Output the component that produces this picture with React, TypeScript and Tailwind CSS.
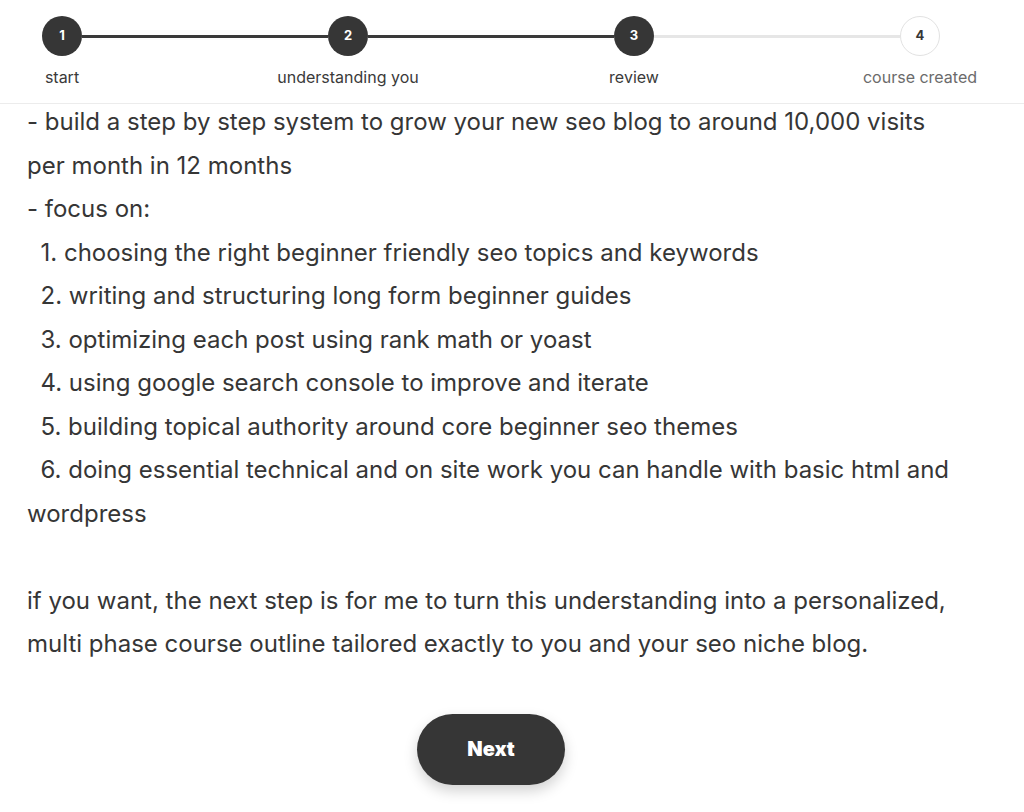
import React from "react";

const steps = [
  { n: "1", label: "start", done: true },
  { n: "2", label: "understanding you", done: true },
  { n: "3", label: "review", done: true },
  { n: "4", label: "course created", done: false },
];

const body = `- build a step by step system to grow your new seo blog to around 10,000 visits per month in 12 months
- focus on:
  1. choosing the right beginner friendly seo topics and keywords
  2. writing and structuring long form beginner guides
  3. optimizing each post using rank math or yoast
  4. using google search console to improve and iterate
  5. building topical authority around core beginner seo themes
  6. doing essential technical and on site work you can handle with basic html and wordpress

if you want, the next step is for me to turn this understanding into a personalized, multi phase course outline tailored exactly to you and your seo niche blog.`;

export default function App() {
  return (
    <div className="w-[1024px] h-[812px] overflow-hidden bg-white flex flex-col">
      <div className="h-[104px] shrink-0 border-b border-[#ececec] bg-white">
        <div className="flex items-start pl-[42px] pr-[84px] pt-[16px]">
          {steps.map((s, i) => (
            <React.Fragment key={s.n}>
              <div className="w-10 flex flex-col items-center shrink-0">
                <div
                  className={
                    s.done
                      ? "w-10 h-10 rounded-full bg-[#363636] text-white flex items-center justify-center text-[13px] font-bold"
                      : "w-10 h-10 rounded-full bg-white border border-[#e2e2e2] text-[#363636] flex items-center justify-center text-[13px] font-bold"
                  }
                  style={{ fontFamily: "Inter, 'Liberation Sans', sans-serif" }}
                >
                  {s.n}
                </div>
                <div
                  className={
                    "mt-[11px] whitespace-nowrap text-[16px] leading-[20px] " +
                    (s.done ? "text-[#3a3a3a]" : "text-[#6b6b6b]")
                  }
                  style={{ fontFamily: "Inter, 'Liberation Sans', sans-serif" }}
                >
                  {s.label}
                </div>
              </div>
              {i < steps.length - 1 && (
                <div
                  className={
                    "flex-1 h-[3px] mt-[18.5px] " +
                    (i < 2 ? "bg-[#3a3a3a]" : "bg-[#e6e6e6]")
                  }
                />
              )}
            </React.Fragment>
          ))}
        </div>
      </div>
      <div className="flex-1 overflow-hidden">
        <div className="pl-[27px] w-[955px] -mt-[4px]">
          <p
            className="whitespace-pre-wrap text-[24px] leading-[43.5px] text-[#363636]"
            style={{ fontFamily: "Inter, 'Noto Sans', sans-serif" }}
          >
            {body}
          </p>
          <div className="flex justify-center mt-[48px]">
            <button className="w-[148px] h-[71px] rounded-full bg-[#363636] text-white text-[20px] font-black shadow-[0_6px_14px_rgba(0,0,0,0.18)]"
              style={{ fontFamily: "Inter, 'Liberation Sans', sans-serif" }}>
              Next
            </button>
          </div>
        </div>
      </div>
    </div>
  );
}
